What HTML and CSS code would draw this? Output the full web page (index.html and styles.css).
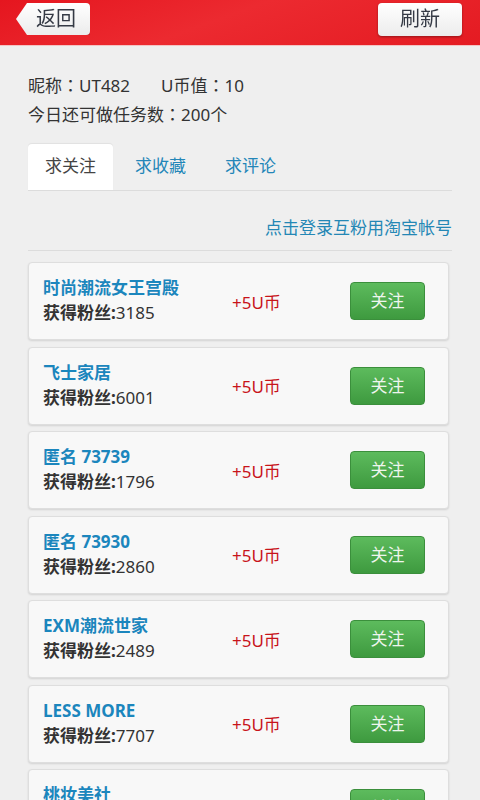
FILE: index.html
```html
<!DOCTYPE html>
<html>
<head>
    <title>互粉</title>
    <link rel="stylesheet" href="styles.css">
</head>
<body>
    <div class="topbar">
        <div class="btn-back">返回</div>
        <div class="btn-refresh">刷新</div>
    </div>

    <div class="page">
        <div class="info">
            <div>昵称<span class="colon">：</span>UT482<span class="coins">U币值<span class="colon">：</span>10</span></div>
            <div>今日还可做任务数<span class="colon">：</span>200个</div>
        </div>

        <div class="tabs">
            <div class="tab active">求关注</div>
            <div class="tab">求收藏</div>
            <div class="tab">求评论</div>
        </div>

        <div class="login-link">点击登录互粉用淘宝帐号</div>

        <div class="list">
            <div class="card">
                <div class="shop">
                    <div class="shop-name">时尚潮流女王宫殿</div>
                    <div class="fans"><b>获得粉丝:</b>3185</div>
                </div>
                <div class="reward">+5U币</div>
                <div class="btn-follow">关注</div>
            </div>
            <div class="card">
                <div class="shop">
                    <div class="shop-name">飞士家居</div>
                    <div class="fans"><b>获得粉丝:</b>6001</div>
                </div>
                <div class="reward">+5U币</div>
                <div class="btn-follow">关注</div>
            </div>
            <div class="card">
                <div class="shop">
                    <div class="shop-name">匿名 73739</div>
                    <div class="fans"><b>获得粉丝:</b>1796</div>
                </div>
                <div class="reward">+5U币</div>
                <div class="btn-follow">关注</div>
            </div>
            <div class="card">
                <div class="shop">
                    <div class="shop-name">匿名 73930</div>
                    <div class="fans"><b>获得粉丝:</b>2860</div>
                </div>
                <div class="reward">+5U币</div>
                <div class="btn-follow">关注</div>
            </div>
            <div class="card">
                <div class="shop">
                    <div class="shop-name">EXM潮流世家</div>
                    <div class="fans"><b>获得粉丝:</b>2489</div>
                </div>
                <div class="reward">+5U币</div>
                <div class="btn-follow">关注</div>
            </div>
            <div class="card">
                <div class="shop">
                    <div class="shop-name">LESS MORE</div>
                    <div class="fans"><b>获得粉丝:</b>7707</div>
                </div>
                <div class="reward">+5U币</div>
                <div class="btn-follow">关注</div>
            </div>
            <div class="card">
                <div class="shop">
                    <div class="shop-name">桃妆美社</div>
                    <div class="fans"><b>获得粉丝:</b>4120</div>
                </div>
                <div class="reward">+5U币</div>
                <div class="btn-follow">关注</div>
            </div>
        </div>
    </div>
</body>
</html>
```

FILE: styles.css
```css
body {
    margin: 0;
    height: 800px;
    overflow: hidden;
    font-family: "Noto Sans", "Noto Sans CJK SC", sans-serif;
    background-color: #efefef;
    color: #333;
}

/* header */
.topbar {
    height: 46px;
    box-sizing: border-box;
    padding: 3px 18px 0 16px;
    display: flex;
    justify-content: space-between;
    align-items: flex-start;
    background: linear-gradient(160deg, #e5161f 0%, #ec2a30 45%, #e41b22 100%);
    border-bottom: 1px solid #f3c4c4;
}

.btn-back,
.btn-refresh {
    height: 32px;
    line-height: 32px;
    font-size: 20px;
    color: #353a45;
    background: linear-gradient(#ffffff, #ececec);
    border-radius: 4px;
    filter: drop-shadow(0 1px 1px rgba(0, 0, 0, 0.35));
}

.btn-back {
    width: 74px;
    box-sizing: border-box;
    padding-left: 20px;
    clip-path: polygon(0 50%, 11px 0, 100% 0, 100% 100%, 11px 100%);
}

.btn-refresh {
    width: 84px;
    text-align: center;
    height: 33px;
}

.page {
    padding: 0 28px;
}

/* user info */
.info {
    margin-top: 25px;
    font-size: 17px;
    line-height: 28px;
    color: #333;
}

.colon {
    font-family: "Noto Sans CJK TC", sans-serif;
}

.coins {
    margin-left: 31px;
}

/* tabs */
.tabs {
    margin-top: 15px;
    height: 46px;
    display: flex;
    gap: 5px;
    border-bottom: 1px solid #dcdcdc;
}

.tab {
    padding: 0 17px;
    line-height: 44px;
    font-size: 17px;
    color: #2386b8;
}

.tab.active {
    color: #444;
    background-color: #fff;
    border-radius: 4px 4px 0 0;
    box-shadow: 0 -1px 1px rgba(0, 0, 0, 0.06);
}

.login-link {
    text-align: right;
    font-size: 17px;
    line-height: 24px;
    padding: 25px 0 10px;
    color: #2487b5;
    border-bottom: 1px solid #dcdcdc;
}

/* list */
.list {
    margin-top: 11px;
    margin-right: 3px;
    display: flex;
    flex-direction: column;
    gap: 6.5px;
}

.card {
    height: 78px;
    box-sizing: border-box;
    display: flex;
    align-items: center;
    padding: 0 23px 0 14px;
    background-color: #f8f8f8;
    border: 1px solid #dedede;
    border-radius: 4px;
    box-shadow: 0 1px 2px rgba(0, 0, 0, 0.12);
}

.shop {
    width: 189px;
    margin-top: -2px;
}

.shop-name {
    font-size: 17px;
    line-height: 25px;
    font-weight: bold;
    color: #1b86bd;
}

.fans {
    font-size: 17px;
    line-height: 25px;
    color: #333;
}

.fans b {
    font-weight: bold;
}

.reward {
    flex: 1;
    font-size: 17px;
    color: #c8141b;
}

.btn-follow {
    width: 75px;
    height: 38px;
    box-sizing: border-box;
    line-height: 36px;
    text-align: center;
    font-size: 17px;
    color: #eef5ee;
    background: linear-gradient(#5dbb5d, #3e9a3f);
    border: 1px solid #3b8f3c;
    border-radius: 4px;
}
```
